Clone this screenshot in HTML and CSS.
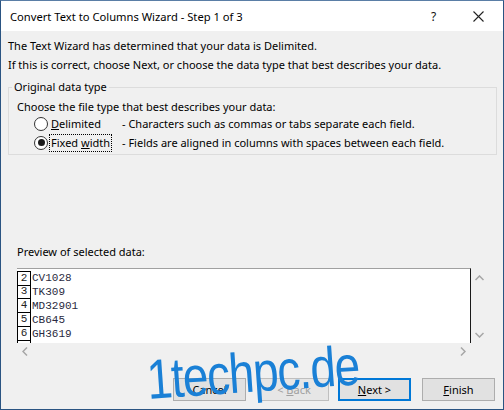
FILE: index.html
```html
<!DOCTYPE html>
<html>
<head>
<meta charset="utf-8">
<link rel="stylesheet" href="styles.css">
</head>
<body>
<div class="window">
  <div class="titlebar">
    <span class="title">Convert Text to Columns Wizard - Step 1 of 3</span>
    <span class="help">?</span>
    <span class="close">
      <svg width="11" height="11" viewBox="0 0 11 11"><path d="M0.5 0.5 L10.5 10.5 M10.5 0.5 L0.5 10.5" stroke="#222" stroke-width="1.1" fill="none"/></svg>
    </span>
  </div>
  <div class="content">
    <div class="msg msg1">The Text Wizard has determined that your data is Delimited.</div>
    <div class="msg">If this is correct, choose Next, or choose the data type that best describes your data.</div>
    <fieldset class="group">
      <legend>Original data type</legend>
      <div class="choose">Choose the file type that best describes your data:</div>
      <div class="radio-row">
        <span class="radio"></span>
        <span class="rlabel"><span class="lab"><u>D</u>elimited</span></span>
        <span class="desc">- Characters such as commas or tabs separate each field.</span>
      </div>
      <div class="radio-row">
        <span class="radio checked"></span>
        <span class="rlabel"><span class="lab focus">Fixed <u>w</u>idth</span></span>
        <span class="desc">- Fields are aligned in columns with spaces between each field.</span>
      </div>
    </fieldset>
    <div class="preview-label">Preview of selected data:</div>
    <div class="preview">
      <div class="preview-main">
        <div class="preview-box">
          <div class="prow"><span class="num">2</span><span class="val">CV1028</span></div>
          <div class="prow"><span class="num">3</span><span class="val">TK309</span></div>
          <div class="prow"><span class="num">4</span><span class="val">MD32901</span></div>
          <div class="prow"><span class="num">5</span><span class="val">CB645</span></div>
          <div class="prow"><span class="num">6</span><span class="val">GH3619</span></div>
          <div class="prow"><span class="num"></span><span class="val"></span></div>
        </div>
        <div class="vscroll">
          <svg width="9" height="6" viewBox="0 0 9 6"><path d="M0.5 5 L4.5 1 L8.5 5" stroke="#a6a6a6" stroke-width="1.5" fill="none"/></svg>
          <svg width="9" height="6" viewBox="0 0 9 6"><path d="M0.5 1 L4.5 5 L8.5 1" stroke="#a6a6a6" stroke-width="1.5" fill="none"/></svg>
        </div>
      </div>
      <div class="hscroll">
        <svg width="6" height="9" viewBox="0 0 6 9"><path d="M5 0.5 L1 4.5 L5 8.5" stroke="#a6a6a6" stroke-width="1.5" fill="none"/></svg>
        <svg width="6" height="9" viewBox="0 0 6 9"><path d="M1 0.5 L5 4.5 L1 8.5" stroke="#a6a6a6" stroke-width="1.5" fill="none"/></svg>
      </div>
    </div>
    <div class="buttons">
      <button class="btn cancel">Cancel</button>
      <button class="btn back" disabled>&lt; <u>B</u>ack</button>
      <button class="btn next default"><u>N</u>ext &gt;</button>
      <button class="btn finish"><u>F</u>inish</button>
    </div>
  </div>
  <div class="watermark">1techpc.de</div>
</div>
</body>
</html>
```
FILE: styles.css
```css
html, body {
  margin: 0;
  padding: 0;
}
body {
  font-family: "Noto Sans", "Open Sans", sans-serif;
  font-size: 11px;
  color: #000;
}
.window {
  position: relative;
  width: 504px;
  height: 410px;
  box-sizing: border-box;
  border: 1px solid #2a5482;
  border-top-color: #5a7ea6;
  background: #f0f0f0;
  display: flex;
  flex-direction: column;
  overflow: hidden;
}
.titlebar {
  height: 30px;
  background: #fff;
  display: flex;
  align-items: center;
  padding-left: 9px;
  flex-shrink: 0;
}
.title {
  flex: 1;
  font-size: 11.2px;
  color: #000;
}
.help {
  width: 12px;
  margin-right: 30px;
  font-size: 12px;
  color: #111;
}
.close {
  display: flex;
  margin-right: 19px;
}
.content {
  flex: 1;
  display: flex;
  flex-direction: column;
  padding: 0 8px 8px 7px;
}
.msg {
  line-height: 19px;
  white-space: nowrap;
}
.msg1 {
  margin-top: 5px;
}
.group {
  margin: 5px -2px 0 0;
  padding: 0 3px 2px;
  border: 1px solid #dcdcdc;
  min-width: 0;
}
.group legend {
  padding: 0 2px;
  line-height: 16px;
}
.choose {
  margin: 4px 0 -1px 5px;
  line-height: 16px;
}
.radio-row {
  display: flex;
  align-items: center;
  height: 19px;
  padding-left: 22px;
}
.radio {
  width: 12px;
  height: 12px;
  border: 1px solid #333;
  border-radius: 50%;
  background: #fff;
  display: flex;
  align-items: center;
  justify-content: center;
}
.radio.checked::after {
  content: "";
  width: 7px;
  height: 7px;
  border-radius: 50%;
  background: #1a1a1a;
}
.rlabel {
  width: 74px;
  padding-left: 2px;
  box-sizing: border-box;
}
.lab {
  padding: 0 1px;
  line-height: 16px;
  display: inline-block;
}
.lab.focus {
  outline: 1px dotted #000;
  outline-offset: 0;
}
.desc {
  white-space: nowrap;
}
.preview-label {
  margin: 89px 0 0 9px;
  line-height: 16px;
}
.preview {
  margin: 8px 0 0 9px;
  display: flex;
  flex-direction: column;
}
.preview-main {
  display: flex;
}
.preview-box {
  width: 454px;
  height: 75px;
  box-sizing: border-box;
  background: #fff;
  border-top: 1px solid #a0a0a0;
  border-right: 1px solid #1a1a1a;
  padding-top: 2px;
  overflow: hidden;
}
.prow {
  display: flex;
  height: 14px;
  font-family: "Liberation Mono", monospace;
  font-size: 11px;
  line-height: 14px;
}
.num {
  width: 14px;
  box-sizing: border-box;
  border-left: 1px solid #000;
  border-right: 1px solid #000;
  border-bottom: 1px solid #000;
  text-align: center;
  height: 14px;
  line-height: 13px;
  color: #222;
}
.prow:first-child .num {
  border-top: 1px solid #000;
  height: 15px;
}
.val {
  padding-left: 1px;
  color: #2a2a40;
}
.vscroll {
  width: 17px;
  display: flex;
  flex-direction: column;
  justify-content: space-between;
  align-items: center;
  padding: 7px 0 5px;
  box-sizing: border-box;
  height: 75px;
}
.hscroll {
  display: flex;
  justify-content: space-between;
  width: 454px;
  box-sizing: border-box;
  padding: 4px 5px 0 5px;
  height: 16px;
}
.buttons {
  margin-top: auto;
  display: flex;
  justify-content: flex-end;
}
.btn {
  width: 73px;
  height: 23px;
  box-sizing: border-box;
  background: #e1e1e1;
  border: 1px solid #adadad;
  font-family: "Noto Sans", "Open Sans", sans-serif;
  font-size: 11px;
  color: #000;
  padding: 0;
  margin: 0;
}
.btn.cancel {
  margin-right: 13px;
}
.btn.back {
  width: 70px;
  color: #a0a0a0;
  border-color: #bfbfbf;
  background: #e6e6e6;
  margin-right: 9px;
}
.btn.next {
  border: 2px solid #0078d7;
  margin-right: 11px;
}
.watermark {
  position: absolute;
  left: 148px;
  top: 349px;
  font-family: "Liberation Sans", Arial, sans-serif;
  font-size: 56px;
  letter-spacing: -1.5px;
  color: #1a80d6;
  transform: rotate(-4deg) scaleX(0.82);
  transform-origin: left bottom;
  line-height: 60px;
  pointer-events: none;
}
```
